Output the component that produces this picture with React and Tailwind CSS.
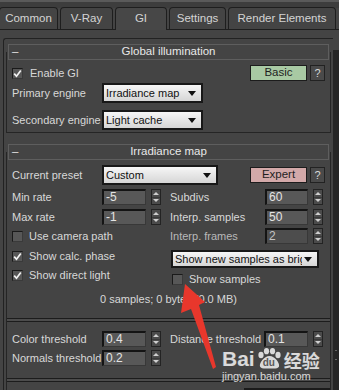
import React from 'react'

const Check = ({ checked }) => (
  <div className="w-[11px] h-[11px] shrink-0 bg-[#575757] border-t border-l border-[#1a1a1a] border-b border-r border-b-[#3a3a3a] border-r-[#3a3a3a] flex items-center justify-center">
    {checked && (
      <svg width="9" height="9" viewBox="0 0 9 9">
        <path d="M1.2 4.6 L3.5 7.2 L7.8 1.4" fill="none" stroke="#f2f2f2" strokeWidth="1.7" />
      </svg>
    )}
  </div>
)

const Spin = () => (
  <div className="w-[10px] h-[16px] shrink-0 border border-[#232323] bg-[#4b4b4b] flex flex-col">
    <div className="flex-1 flex items-center justify-center border-b border-[#3a3a3a]">
      <svg width="6" height="3" viewBox="0 0 6 3"><path d="M0 3 L3 0 L6 3Z" fill="#cfcfcf" /></svg>
    </div>
    <div className="flex-1 flex items-center justify-center">
      <svg width="6" height="3" viewBox="0 0 6 3"><path d="M0 0 L6 0 L3 3Z" fill="#cfcfcf" /></svg>
    </div>
  </div>
)

const Field = ({ v, w, dim }) => (
  <div className={`${w} h-[16px] shrink-0 ${dim ? 'bg-[#4d4d4d] text-[#c4c4c4]' : 'bg-[#585858] text-[#e4e4e4]'} border-t-2 border-l-2 border-[#141414] border-b border-r border-b-[#383838] border-r-[#383838] pl-[2px] text-[12px] leading-[13px]`}>
    {v}
  </div>
)

const Drop = ({ text, w, h }) => (
  <div className={`${w} ${h} shrink-0 border-2 border-[#181818] bg-linear-to-b from-[#f6f6f6] to-[#d6d6d6] flex items-center pl-[2px] pr-[5px] text-[#111] text-[11px]`}>
    <span className="flex-1 overflow-hidden whitespace-nowrap">{text}</span>
    <svg width="8" height="5" viewBox="0 0 8 5" className="shrink-0 ml-[2px]"><path d="M0 0 H8 L4 5Z" fill="#111" /></svg>
  </div>
)

const Btn = ({ children, bg }) => (
  <div className={`w-[57px] h-[16px] ${bg} border border-[#1c1c1c] flex items-center justify-center text-[#1e1e1e] text-[11.5px]`}>
    {children}
  </div>
)

const Q = () => (
  <div className="w-[15px] h-[16px] ml-[3px] bg-[#4a4a4a] border border-[#222] flex items-center justify-center text-[#d8d8d8]">?</div>
)

const NumRow = ({ label, v, lw, fw, dim, className = '' }) => (
  <div className={`flex items-center h-[16px] ${className}`}>
    <span className={`${lw} shrink-0 whitespace-nowrap ${dim ? 'text-[#b9b9b9]' : ''}`}>{label}</span>
    <Field v={v} w={fw} dim={dim} />
    <div className="ml-[5px]"><Spin /></div>
  </div>
)

const CheckRow = ({ label, checked, className = '' }) => (
  <div className={`flex items-center h-[16px] ${className}`}>
    <Check checked={checked} />
    <span className="ml-[6px] whitespace-nowrap">{label}</span>
  </div>
)

const Header = ({ title }) => (
  <div className="relative z-10 mx-[2px] h-[16px] border border-[#5e5e5e] bg-[#444444] flex items-center text-[#e8e8e8] text-[11.5px]">
    <span className="w-[10px] ml-[3px]">–</span>
    <span className="flex-1 text-center pr-[13px]">{title}</span>
  </div>
)

const Sep = ({ className = '' }) => (
  <div className={`h-[4px] border-y border-[#1c1c1c] bg-[#4c4c4c] ${className}`} />
)

const tabs = [
  { t: 'Common', w: 'w-[59px]' },
  { t: 'V-Ray', w: 'w-[53px]' },
  { t: 'GI', w: 'w-[52px]', active: true },
  { t: 'Settings', w: 'w-[57px]' },
  { t: 'Render Elements', w: 'w-[108px]' },
]

export default function App() {
  return (
    <div className="relative w-[339px] h-[390px] overflow-hidden bg-[#444444] font-['Liberation_Sans',Arial,sans-serif] text-[11px] text-[#d8d8d8] leading-none">
      <div className="h-[8px] bg-[#3d3d3d] border-t-2 border-[#5a5a5a]" />

      {/* tabs */}
      <div className="flex items-end h-[22px] border-b border-[#1e1e1e] -ml-[1px] gap-[2px]">
        {tabs.map((tb) => (
          <div
            key={tb.t}
            className={`${tb.w} shrink-0 border border-b-0 border-[#1e1e1e] rounded-t-[4px] flex items-center justify-center text-[#d4d4d4] text-[11.5px] ${tb.active ? 'h-[23px] -mb-[1px] bg-[#474747]' : 'h-[22px] bg-[#444444]'}`}
          >
            {tb.t}
          </div>
        ))}
      </div>

      <div className="flex">
        <div className="w-[330px] ml-[3px] mt-[8px] border-l border-t border-[#222] rounded-tl-[3px] h-[360px]">
          {/* Global illumination */}
          <div className="ml-[2px] w-[325px] mt-[5px]">
            <Header title="Global illumination" />
            <div className="-mt-[8px] pt-[8px] pb-[2px] border-x border-b border-[#252525] pl-[5px] pr-[5px]">
              <div className="flex items-center h-[16px] mt-[5px]">
                <Check checked />
                <span className="ml-[7px] flex-1">Enable GI</span>
                <Btn bg="bg-[#a8c9a3]">Basic</Btn>
                <Q />
              </div>
              <div className="flex items-center h-[20px] mt-[2px]">
                <span className="w-[90px] shrink-0">Primary engine</span>
                <Drop text="Irradiance map" w="w-[101px]" h="h-[20px]" />
              </div>
              <div className="flex items-center h-[20px] mt-[7px]">
                <span className="w-[90px] shrink-0 whitespace-nowrap">Secondary engine</span>
                <Drop text="Light cache" w="w-[101px]" h="h-[20px]" />
              </div>
            </div>
          </div>

          {/* Irradiance map */}
          <div className="ml-[2px] w-[325px] mt-[11px]">
            <Header title="Irradiance map" />
            <div className="-mt-[8px] pt-[8px] border-x border-[#252525]">
              <div className="flex items-center h-[20px] mt-[5px] pl-[5px] pr-[5px]">
                <span className="w-[90px] shrink-0">Current preset</span>
                <Drop text="Custom" w="w-[116px]" h="h-[20px]" />
                <div className="flex-1" />
                <Btn bg="bg-[#d3a9a9]">Expert</Btn>
                <Q />
              </div>

              <div className="flex mt-[4px]">
                <div className="w-[163px] pl-[5px] flex flex-col">
                  <NumRow label="Min rate" v="-5" lw="w-[90px]" fw="w-[44px]" />
                  <NumRow label="Max rate" v="-1" lw="w-[90px]" fw="w-[44px]" className="mt-[4px]" />
                  <CheckRow label="Use camera path" className="mt-[3px]" />
                  <CheckRow label="Show calc. phase" checked className="mt-[4px]" />
                  <CheckRow label="Show direct light" checked className="mt-[3px]" />
                </div>
                <div className="flex-1 flex flex-col">
                  <NumRow label="Subdivs" v="60" lw="w-[95px]" fw="w-[43px]" />
                  <NumRow label="Interp. samples" v="50" lw="w-[95px]" fw="w-[43px]" className="mt-[4px]" />
                  <NumRow label="Interp. frames" v="2" lw="w-[95px]" fw="w-[43px]" dim className="mt-[3px]" />
                  <div className="mt-[6px] ml-[1px]">
                    <Drop text="Show new samples as brightness" w="w-[148px]" h="h-[18px]" />
                  </div>
                  <div className="mt-[3px] ml-[2px]">
                    <CheckRow label="Show samples" />
                  </div>
                </div>
              </div>

              <div className="mt-[5px] h-[14px] flex items-center justify-center">0 samples; 0 bytes (0.0 MB)</div>

              <Sep className="mt-[12px]" />

              <div className="flex mt-[9px]">
                <div className="w-[163px] pl-[5px] flex flex-col">
                  <NumRow label="Color threshold" v="0.4" lw="w-[90px]" fw="w-[44px]" />
                  <NumRow label="Normals threshold" v="0.2" lw="w-[90px]" fw="w-[44px]" className="mt-[3px]" />
                </div>
                <div className="flex-1 flex flex-col">
                  <NumRow label="Distance threshold" v="0.1" lw="w-[94px]" fw="w-[44px]" />
                </div>
              </div>

              <Sep className="mt-[12px]" />

              <div className="flex justify-end mt-[6px]">
                <div className="w-[86px] h-[6px] border-t-2 border-x-2 border-[#1a1a1a] bg-[#e6e6e6]" />
              </div>
            </div>
          </div>
        </div>
        <div className="flex-1 mt-[20px] bg-[#262626] h-[360px] flex justify-center pt-[300px]">
          <div className="w-[2px] h-[10px] border-y border-[#666]" />
        </div>
      </div>

      {/* red arrow annotation */}
      <svg className="absolute left-0 top-0 pointer-events-none" width="339" height="390" viewBox="0 0 339 390">
        <path d="M185 284 L205 302 L199 305 L216 367 L213 369 L191 309 L181 313 Z" fill="#e8372c" />
      </svg>

      {/* watermark */}
      <div className="absolute left-[222px] top-[348px] pointer-events-none text-white/80">
        <div className="flex items-end h-[21px]">
          <span className="text-[21px] font-bold leading-none">Bai</span>
          <div className="relative w-[27px] h-[21px] ml-[1px]">
            <svg width="27" height="21" viewBox="0 0 27 21" className="absolute left-0 top-0">
              <g fill="rgba(255,255,255,0.8)">
                <ellipse cx="5" cy="7" rx="2.6" ry="3.2" />
                <ellipse cx="10.5" cy="3.2" rx="2.6" ry="3.1" />
                <ellipse cx="16.5" cy="3.2" rx="2.6" ry="3.1" />
                <ellipse cx="22" cy="7" rx="2.6" ry="3.2" />
                <path d="M13.5 8 C19 8 24 15 23 18.5 C22 21 18 20.5 13.5 20.5 C9 20.5 5 21 4 18.5 C3 15 8 8 13.5 8Z" />
              </g>
            </svg>
            <span className="absolute left-[7px] top-[10px] text-[10px] font-bold leading-none text-[#5a5a5a]">du</span>
          </div>
          <span className="ml-[1px] text-[18px] font-bold leading-none font-['Noto_Sans_CJK_SC',sans-serif]">经验</span>
        </div>
        <div className="text-[11px] leading-none mt-[2px] w-[90px]">jingyan.baidu.com</div>
      </div>
    </div>
  )
}
